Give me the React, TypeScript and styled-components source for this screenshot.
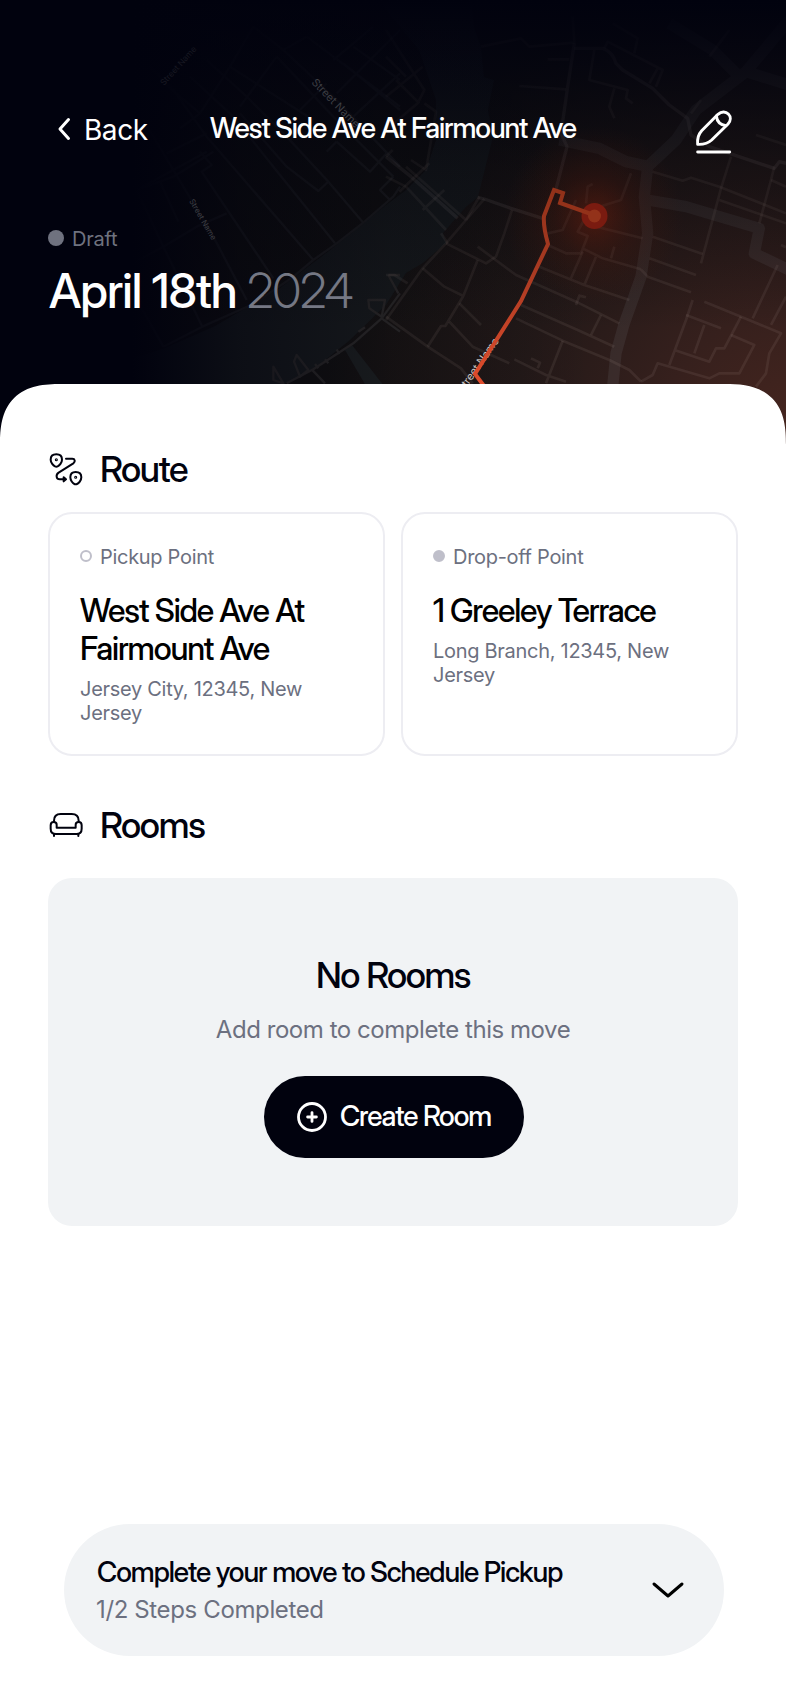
import React from "react";
import styled, { createGlobalStyle } from "styled-components";

const display = `"Inter Display", Inter, "Liberation Sans", sans-serif`;

const GlobalStyle = createGlobalStyle`
  * { box-sizing: border-box; }
  body { margin: 0; background: #fff; font-family: Inter, "Liberation Sans", sans-serif; -webkit-font-smoothing: antialiased; }
  h1, h2, h3, p { margin: 0; font-weight: 500; }
  h1, h2, h3 { font-family: ${display}; }
  button { font-family: inherit; border: 0; margin: 0; padding: 0; background: none; color: inherit; }
`;

const Screen = styled.div`
  width: 786px;
  height: 1704px;
  display: flex;
  flex-direction: column;
  position: relative;
  overflow: hidden;
`;

const MapBackdrop = styled.svg`
  position: absolute;
  inset: 0 0 auto 0;
  width: 786px;
  height: 460px;
`;

const Header = styled.header`
  position: relative;
  height: 384px;
  flex: none;
  padding: 100px 48px 0;
  display: flex;
  flex-direction: column;
  color: #fff;
`;

const NavBar = styled.nav`
  height: 60px;
  display: grid;
  grid-template-columns: 1fr auto 1fr;
  align-items: center;
`;

const BackButton = styled.button`
  display: flex;
  align-items: center;
  gap: 12px;
  padding-left: 8px;
  font-size: 28px;
  line-height: 34px;
  letter-spacing: -0.45px;
`;

const NavTitle = styled.h1`
  padding-bottom: 5px;
  font-size: 28px;
  line-height: 34px;
  letter-spacing: -1.08px;
`;

const EditButton = styled.button`
  justify-self: end;
  display: flex;
  margin-right: 3px;
  padding-top: 4px;
`;

const Status = styled.div`
  display: flex;
  align-items: center;
  gap: 8px;
  margin-top: 67px;
  font-size: 20px;
  line-height: 24px;
  letter-spacing: -0.2px;
  color: #6f727f;
`;

const StatusDot = styled.span`
  width: 16px;
  height: 16px;
  margin-top: -2px;
  border-radius: 50%;
  background: #6f727f;
`;

const MoveDate = styled.h2`
  margin: 11px 0 0 1px;
  font-size: 48px;
  line-height: 58px;
  letter-spacing: -1.02px;
`;

const Year = styled.span`
  font-weight: 300;
  letter-spacing: -1.1px;
  color: #757884;
`;

const Sheet = styled.main`
  position: relative;
  flex: 1;
  display: flex;
  flex-direction: column;
  padding: 63px 48px 48px;
  border-radius: 50px 50px 0 0;
  background: #fff;
  color: #01020e;

  @supports (corner-shape: superellipse(1.4)) {
    border-radius: 61px 61px 0 0;
    corner-shape: superellipse(1.4);
  }
`;

const SectionHeading = styled.h2<{ $gap: number }>`
  display: flex;
  align-items: center;
  gap: 16px;
  height: 44px;
  margin-bottom: ${(p) => p.$gap}px;
  font-size: 36px;
  line-height: 44px;
  letter-spacing: -1.25px;
`;

const RouteCards = styled.div`
  display: grid;
  grid-template-columns: 1fr 1fr;
  gap: 16px;
  margin-bottom: 47px;
`;

const PointCard = styled.article`
  height: 244px;
  padding: 31px 30px;
  border: 2px solid #ededf2;
  border-radius: 24px;
`;

const PointLabel = styled.div`
  display: flex;
  align-items: center;
  gap: 8px;
  margin-bottom: 23px;
  font-size: 20px;
  line-height: 24px;
  letter-spacing: -0.3px;
  color: #6c7080;
`;

const PointDot = styled.span<{ $filled?: boolean }>`
  width: 12px;
  height: 12px;
  margin-top: -2px;
  border: 2px solid #bfbfca;
  border-radius: 50%;
  background: ${(p) => (p.$filled ? "#bfbfca" : "transparent")};
`;

const PointName = styled.h3`
  font-size: 32px;
  line-height: 38px;
  letter-spacing: -1.2px;
  color: #000;
`;

const PointAddress = styled.p`
  margin-top: 9px;
  font-size: 20px;
  font-weight: 400;
  line-height: 24px;
  letter-spacing: -0.29px;
  color: #6c7080;
`;

const EmptyState = styled.section`
  height: 348px;
  padding-top: 75px;
  display: flex;
  flex-direction: column;
  align-items: center;
  border-radius: 24px;
  background: #f1f3f5;
`;

const EmptyTitle = styled.h3`
  font-size: 36px;
  line-height: 44px;
  letter-spacing: -1.4px;
`;

const EmptyText = styled.p`
  margin: 18px 0 31px;
  font-size: 24px;
  font-weight: 400;
  line-height: 30px;
  letter-spacing: -0.45px;
  color: #6c7080;
`;

const CreateButton = styled.button`
  display: flex;
  align-items: center;
  justify-content: center;
  gap: 13px;
  width: 260px;
  height: 82px;
  margin-left: 2px;
  border-radius: 41px;
  background: #01020e;
  color: #fff;
  font-family: ${display};
  font-size: 28px;
  font-weight: 500;
  line-height: 32px;
  letter-spacing: -1.1px;
`;

const ButtonLabel = styled.span`
  padding-bottom: 2px;
`;

const ProgressBar = styled.section`
  display: flex;
  align-items: center;
  justify-content: space-between;
  height: 132px;
  margin: auto 14px 0 16px;
  padding: 0 39px 0 32px;
  border-radius: 66px;
  background: #f1f3f5;
`;

const ProgressText = styled.div`
  display: flex;
  flex-direction: column;
  gap: 6px;
  padding-bottom: 1px;
`;

const ProgressTitle = styled.h3`
  padding-left: 1px;
  font-size: 28px;
  line-height: 34px;
  letter-spacing: -1.06px;
`;

const ProgressCount = styled.p`
  font-size: 24px;
  font-weight: 400;
  line-height: 30px;
  letter-spacing: -0.37px;
  color: #6c7080;
`;

const StreetLabel = styled.text`
  font-family: Inter, sans-serif;
  font-size: 30px;
`;

const leftStreets = [
  "M490 1040 L607 980 L760 912 L880 830 L940 780 L1010 730 L1090 668 L1180 590 L1200 560",
  "M490 1040 L360 810 L490 740 L590 680 L680 640",
  "M607 980 L490 740 L410 570 L620 455",
  "M740 900 L640 710 L520 510 L430 360 L330 330",
  "M480 545 L535 665", "M410 570 L520 530 L640 455",
  "M820 835 L605 515 L635 495 L600 455",
  "M940 780 L620 410 L520 270 L450 200",
  "M1005 730 L820 500 L700 350 L570 230",
  "M1090 668 L985 545 L860 410 L740 290 L620 180",
  "M985 545 L955 573 L860 500 L720 340",
  "M600 340 L690 200 L760 80", "M690 200 L940 360 M720 320 L830 170",
  "M830 170 L1000 350 L1180 530", "M850 150 L1010 300 L1200 500",
  "M1180 530 L1140 570 L1170 600 M1010 425 L1110 515 L1160 460",
  "M1010 425 L980 455 M1010 280 L1200 90 M1060 350 L1200 220",
  "M920 110 L1200 320 M980 250 L900 330 M500 460 L620 400",
  "M540 385 L600 340 L480 240 M1030 190 L1200 330 M1060 140 L1200 240",
  "M760 80 L850 150 L920 110 M1000 180 L1120 80",
];

const leftBankStreets = [
  "M860 1150 L940 1108 L1060 1030 L1145 955 L1200 880",
  "M935 1108 L975 1150 M1145 955 L1200 995",
  "M820 1100 L850 1150 L820 1140 Z M890 1065 L925 1110 L900 1130 L882 1085 Z",
  "M1105 900 L1155 900 L1145 950 L1108 925 Z M1165 825 H1200 M1165 825 L1195 880",
  "M945 1092 L955 1105 M975 1078 L985 1090 M1010 1048 L1018 1062 M1075 995 L1095 982",
];

const rightStreets = [
  "M0 960 L110 805 L180 730 L240 660 L295 597",
  "M0 950 L125 1040 L225 1105 L260 1150",
  "M110 805 L175 860 L232 888 M125 1040 L165 978 L178 978 L232 888 L275 780",
  "M180 730 L300 790 L330 770 L355 700 L378 630",
  "M275 740 L390 825 L570 905 L700 970",
  "M190 965 L260 1040 L370 1090 M220 910 L285 975",
  "M405 915 L575 990 L685 1040 M390 955 L530 1022 L670 1080 L730 1110 L765 1145",
  "M530 1022 L480 1150 M385 1078 L480 1125 L540 1145 M435 1075 L462 1088 L455 1105",
  "M460 800 L595 855 L730 900 M595 855 L630 770 M555 835 L590 755",
  "M570 915 L580 887 L600 892 M615 1005 L645 945",
  "M485 735 L540 760 L585 760 L605 708 L575 695 L605 640 M590 745 L650 775 L765 808",
  "M675 775 L685 740 M630 680 L770 715 M485 700 L530 690 L570 600 M600 610 L605 560 L620 552",
  "M640 620 L705 600 L735 520", "M800 710 L950 762 M790 775 L930 825 M765 808 L785 830 L915 877",
  "M800 515 L890 542 L915 533 L1000 560 L1200 640 M1000 600 L1200 670",
  "M1035 470 L1005 565 L945 790 M1110 405 L1200 435 M1165 500 L1155 540 L1120 670",
  "M1155 540 L1200 560 M955 905 L1065 950 L1185 1000 L1150 1060 L1140 1120 L1110 1160",
  "M1065 950 L1015 1045 L990 1045 L970 1085 L865 1050 M920 900 L900 960 L850 1095",
  "M900 945 L1005 985 M955 975 L925 1060 M1035 1005 L1105 1035 L1060 1120 L1000 1120 L970 1135 L815 1090 L800 1125 L765 1145",
  "M1175 795 L1100 955 M1200 890 L1155 975 M1185 735 L1200 742",
  "M0 290 L110 200 M0 90 L115 270 L95 310 L0 390 M30 240 L100 310 M115 310 L150 335 L120 510 L75 480",
  "M0 170 L60 230 M20 450 L0 470 M40 575 L130 490 M110 630 L175 570 M60 560 L180 690",
  "M60 500 L240 660 M0 530 L60 560 M240 660 L280 590 M165 700 L185 730 M0 825 L25 825 L65 850",
  "M285 140 L405 115 L430 140 L565 128 L560 50 M485 178 H550 M400 258 L540 268",
  "M625 150 L610 240 L725 270 L720 295 L740 310 M685 265 L670 320 L685 355",
  "M655 145 L665 125 L830 210 L810 260 M790 250 L815 205 M680 70 L755 115 L745 160",
  "M915 340 L945 300 M970 170 L1030 90",
];

const rightAvenues = [
  "M565 145 H650 Q680 155 690 190 L710 210 L800 265 L850 315 L905 355 L915 405 L970 440 L1165 505 L1180 485 L1200 490",
  "M565 130 L545 260 L525 400 L543 440 L508 575",
  "M275 592 L295 597 L375 625 L470 655",
  "M0 470 L75 530 L215 655",
];

const canals =
  "M1210 60 L1080 215 L930 330 L870 420 L785 500 L775 590 L785 700 L765 830 L715 970 L690 1060 L680 1160 " +
  "M1080 215 L1210 255 M1050 220 L980 150 L850 70 " +
  "M520 420 L640 445 L720 485 L790 500 " +
  "M785 600 L900 620 L1120 685 L1105 760 L1210 810";

function RouteMap() {
  return (
    <MapBackdrop viewBox="0 0 786 460">
      <defs>
        <radialGradient id="warm" gradientUnits="userSpaceOnUse" cx="800" cy="450" r="480">
          <stop offset="0" stopColor="#48261f" />
          <stop offset="0.3" stopColor="#36201d" />
          <stop offset="0.6" stopColor="#231918" />
          <stop offset="1" stopColor="#121111" />
        </radialGradient>
        <radialGradient id="glow">
          <stop offset="0" stopColor="#a02408" stopOpacity="0.36" />
          <stop offset="0.45" stopColor="#701c08" stopOpacity="0.18" />
          <stop offset="1" stopColor="#601c08" stopOpacity="0" />
        </radialGradient>
        <linearGradient id="fadeTop" x1="0" y1="0" x2="0" y2="1">
          <stop offset="0" stopColor="#01020e" />
          <stop offset="0.2" stopColor="#01020e" stopOpacity="0.75" />
          <stop offset="0.5" stopColor="#02030b" stopOpacity="0.38" />
          <stop offset="1" stopColor="#040408" stopOpacity="0" />
        </linearGradient>
        <linearGradient id="fadeLeft" x1="0" y1="0" x2="1" y2="0">
          <stop offset="0" stopColor="#01020e" />
          <stop offset="0.22" stopColor="#01020e" />
          <stop offset="0.4" stopColor="#01020e" stopOpacity="0.5" />
          <stop offset="0.65" stopColor="#01020e" stopOpacity="0.15" />
          <stop offset="1" stopColor="#01020e" stopOpacity="0" />
        </linearGradient>
        <linearGradient id="path" gradientUnits="userSpaceOnUse" x1="590" y1="200" x2="475" y2="384">
          <stop offset="0" stopColor="#8f3018" />
          <stop offset="0.4" stopColor="#a83a22" />
          <stop offset="1" stopColor="#e04c2c" />
        </linearGradient>
      </defs>
      <rect width="786" height="460" fill="url(#warm)" />
      <path
        d="M120 362 L165 348 L215 326 L280 288 L330 250 L386 205 L406 190 L426 170 L436 140 L436 100 L419 50 L386 10 L380 0 H471 L474 27 L481 47 L484 77 L494 80 L488 110 L493 137 L478 197 L466 207 L443 233 L446 243 L423 263 L406 273 L386 305 L350 340 L313 370 L280 386 L120 420 Z"
        fill="#181b1d"
      />
      <path d="M345 350 L352 345 L384 386 H366 Z" fill="#1c1f20" />
      <g transform="scale(.33333)" fill="none" strokeLinejoin="round">
        <g stroke="#1f1f21" strokeWidth="7">
          {leftStreets.map((d) => <path key={d} d={d} />)}
        </g>
        <g stroke="#2a2828" strokeWidth="7">
          {leftBankStreets.map((d) => <path key={d} d={d} />)}
        </g>
      </g>
      <g transform="translate(386 0) scale(.33333)" fill="none" strokeLinejoin="round">
        <path d={canals} stroke="#a0a4b0" strokeOpacity="0.1" strokeWidth="34" />
        <g stroke="#c8b0a8" strokeOpacity="0.1" strokeWidth="8">
          {rightStreets.map((d) => <path key={d} d={d} />)}
        </g>
        <g stroke="#c0b4b0" strokeOpacity="0.13" strokeWidth="10">
          {rightAvenues.map((d) => <path key={d} d={d} />)}
        </g>
      </g>
      <rect width="786" height="330" fill="url(#fadeTop)" />
      <rect width="600" height="460" fill="url(#fadeLeft)" />
      <g fill="#3e3f44">
        <StreetLabel transform="translate(164 86) rotate(-48) scale(.28)" opacity="0.35">Street Name</StreetLabel>
        <StreetLabel transform="translate(311 83) rotate(46) scale(.36)">Street Name</StreetLabel>
        <StreetLabel transform="translate(189 201) rotate(60) scale(.26)">Street Name</StreetLabel>
      </g>
      <StreetLabel transform="translate(463 393) rotate(-55) scale(.36)" fill="#c9c3c1">Street Name</StreetLabel>
      <circle cx="594" cy="216" r="90" fill="url(#glow)" />
      <circle cx="594.5" cy="216" r="13" fill="#7a1b10" />
      <path
        d="M594 215 L560 203 L563 193 L554 190 L544 216 Q543 226 548 244 L521 301 L475 374 L484 386"
        fill="none"
        stroke="url(#path)"
        strokeWidth="4"
      />
      <circle cx="594.5" cy="216" r="6.5" fill="#93321a" />
    </MapBackdrop>
  );
}

const PinRouteIcon = () => (
  <svg width="36" height="36" viewBox="24 33 108 108" fill="none" stroke="#01020e" strokeWidth="6" strokeLinecap="round" strokeLinejoin="round">
    <path d="M49 43 C38 43 32 50 32 59 C32 68 40 77 45 79 Q49 81 53 79 C58 77 66 68 66 59 C66 50 60 43 49 43 Z" />
    <path d="M107 96 C96 96 91 103 91 112 C91 121 98 130 103 132 Q107 134 111 132 C116 130 124 121 124 112 C124 103 118 96 107 96 Z" />
    <path d="M78 56 H97 C105 56 107 65 100 70 L56 98 C46 105 49 118 59 118 H76 M71 112 L78 118 L71 124 Z" />
    <circle cx="49" cy="59" r="1.6" />
    <circle cx="107" cy="112" r="1.6" />
  </svg>
);

const SofaIcon = () => (
  <svg width="36" height="36" viewBox="54 51 108 108" fill="none" stroke="#01020e" strokeWidth="6" strokeLinecap="round" strokeLinejoin="round">
    <path d="M72 96 V92 C72 78 79 72 92 72 H125 C138 72 146 78 146 92 V96" />
    <path d="M80 113 V104 C80 99 76 96 71 96 C65 96 62 100 62 106 V116 C62 127 67 132 78 132 H139 C150 132 155 127 155 116 V106 C155 100 151 96 146 96 C140 96 137 99 137 104 V113 Z" />
    <path d="M72 133 V138 M145 133 V138" />
  </svg>
);

const PencilIcon = () => (
  <svg width="42" height="48" viewBox="922 324 126 144" fill="none" stroke="#fff" strokeWidth="8.8" strokeLinecap="round" strokeLinejoin="round">
    <path d="M936 433 C934 415 937 404 948 392 L997 343 C1008 333 1021 335 1028 342 C1036 350 1036 362 1027 372 L978 420 C966 431 954 434 936 433 Z" />
    <path d="M992 348 C994 364 1005 375 1021 377" />
    <path d="M936 456 H1032" />
  </svg>
);

const BackIcon = () => (
  <svg width="16" height="26" viewBox="0 0 16 26" fill="none" stroke="#fff" strokeWidth="3" strokeLinecap="round" strokeLinejoin="round">
    <path d="M12.5 2.5 L4 12 L12.5 21.5" />
  </svg>
);

const PlusCircleIcon = () => (
  <svg width="30" height="30" viewBox="0 0 30 30" fill="none" stroke="#fff" strokeWidth="2.8" strokeLinecap="round">
    <circle cx="15" cy="15" r="13.5" />
    <path d="M15 10.6 V19.4 M10.6 15 H19.4" />
  </svg>
);

const ChevronIcon = () => (
  <svg width="34" height="18" viewBox="0 0 34 18" fill="none" stroke="#000" strokeWidth="3" strokeLinecap="round" strokeLinejoin="round">
    <path d="M3 3 L17 15 L31 3" />
  </svg>
);

const points = [
  { label: "Pickup Point", name: "West Side Ave At Fairmount Ave", address: "Jersey City, 12345, New Jersey", filled: false },
  { label: "Drop-off Point", name: "1 Greeley Terrace", address: "Long Branch, 12345, New Jersey", filled: true },
];

export default function App() {
  return (
    <Screen>
      <GlobalStyle />
      <RouteMap />
      <Header>
        <NavBar>
          <BackButton><BackIcon />Back</BackButton>
          <NavTitle>West Side Ave At Fairmount Ave</NavTitle>
          <EditButton aria-label="Edit"><PencilIcon /></EditButton>
        </NavBar>
        <Status><StatusDot />Draft</Status>
        <MoveDate>April 18th <Year>2024</Year></MoveDate>
      </Header>
      <Sheet>
        <SectionHeading $gap={21}><PinRouteIcon />Route</SectionHeading>
        <RouteCards>
          {points.map((point) => (
            <PointCard key={point.label}>
              <PointLabel><PointDot $filled={point.filled} />{point.label}</PointLabel>
              <PointName>{point.name}</PointName>
              <PointAddress>{point.address}</PointAddress>
            </PointCard>
          ))}
        </RouteCards>
        <SectionHeading $gap={31}><SofaIcon />Rooms</SectionHeading>
        <EmptyState>
          <EmptyTitle>No Rooms</EmptyTitle>
          <EmptyText>Add room to complete this move</EmptyText>
          <CreateButton><PlusCircleIcon /><ButtonLabel>Create Room</ButtonLabel></CreateButton>
        </EmptyState>
        <ProgressBar>
          <ProgressText>
            <ProgressTitle>Complete your move to Schedule Pickup</ProgressTitle>
            <ProgressCount>1/2 Steps Completed</ProgressCount>
          </ProgressText>
          <ChevronIcon />
        </ProgressBar>
      </Sheet>
    </Screen>
  );
}
